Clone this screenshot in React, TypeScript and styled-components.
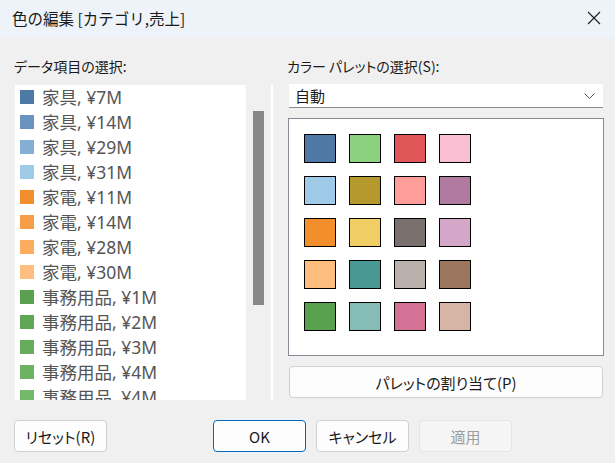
import React from 'react';
import styled, { createGlobalStyle } from 'styled-components';

const GlobalStyle = createGlobalStyle`
  html, body {
    margin: 0;
    padding: 0;
    background: #f0f0f0;
  }
  * {
    box-sizing: border-box;
  }
`;

const font = `"Noto Sans CJK JP", "Noto Sans", sans-serif`;
const listFont = `"Noto Sans", "Noto Sans CJK JP", sans-serif`;

const items = [
  { label: '家具, ¥7M', color: '#4e79a7' },
  { label: '家具, ¥14M', color: '#6a93bf' },
  { label: '家具, ¥29M', color: '#85aed4' },
  { label: '家具, ¥31M', color: '#a0cbe8' },
  { label: '家電, ¥11M', color: '#f28e2b' },
  { label: '家電, ¥14M', color: '#f69d48' },
  { label: '家電, ¥28M', color: '#fbac5f' },
  { label: '家電, ¥30M', color: '#ffbe7d' },
  { label: '事務用品, ¥1M', color: '#59a14f' },
  { label: '事務用品, ¥2M', color: '#5fa755' },
  { label: '事務用品, ¥3M', color: '#65ac5b' },
  { label: '事務用品, ¥4M', color: '#6cb262' },
  { label: '事務用品, ¥4M', color: '#74b869' },
];

const palette = [
  '#4e79a7', '#8cd17d', '#e15759', '#fabfd2',
  '#a0cbe8', '#b6992d', '#ff9d9a', '#b07aa1',
  '#f28e2b', '#f1ce63', '#79706e', '#d4a6c8',
  '#ffbe7d', '#499894', '#bab0ac', '#9d7660',
  '#59a14f', '#86bcb6', '#d37295', '#d7b5a6',
];

const App = () => {
  return (
    <Dialog>
      <GlobalStyle />
      <TitleBar>
        <Title>色の編集 [カテゴリ,売上]</Title>
        <CloseButton>
          <svg width="14" height="14" viewBox="0 0 14 14">
            <path d="M1 1 L13 13 M13 1 L1 13" stroke="#1a1a1a" strokeWidth="1.1" fill="none" />
          </svg>
        </CloseButton>
      </TitleBar>
      <Body>
        <LeftPane>
          <Label>データ項目の選択:</Label>
          <ListRow>
            <List>
              {items.map((item, i) => (
                <Item key={i}>
                  <ItemSwatch color={item.color} />
                  <span>{item.label}</span>
                </Item>
              ))}
            </List>
            <ScrollTrack>
              <ScrollThumb />
            </ScrollTrack>
            <Splitter />
          </ListRow>
        </LeftPane>
        <RightPane>
          <Label>カラー パレットの選択(S):</Label>
          <Select>
            <span>自動</span>
            <svg width="11" height="6" viewBox="0 0 11 6">
              <path d="M0.5 0.5 L5.5 5.5 L10.5 0.5" stroke="#555" strokeWidth="1" fill="none" />
            </svg>
          </Select>
          <PaletteBox>
            <PaletteGrid>
              {palette.map((c, i) => (
                <PaletteSwatch key={i} color={c} />
              ))}
            </PaletteGrid>
          </PaletteBox>
          <Button $wide>パレットの割り当て(P)</Button>
        </RightPane>
      </Body>
      <Footer>
        <Button>リセット(R)</Button>
        <FooterRight>
          <Button $primary>OK</Button>
          <Button>キャンセル</Button>
          <Button disabled>適用</Button>
        </FooterRight>
      </Footer>
    </Dialog>
  );
};

const Dialog = styled.div`
  width: 615px;
  height: 463px;
  background: #f0f0f0;
  font-family: ${font};
  color: #1a1a1a;
  display: flex;
  flex-direction: column;
  overflow: hidden;
`;

const TitleBar = styled.div`
  height: 38px;
  background: #eef3f9;
  display: flex;
  align-items: center;
  justify-content: space-between;
  padding: 0 11px 2px 12px;
`;

const Title = styled.div`
  font-size: 15.5px;
  color: #1a1a1a;
`;

const CloseButton = styled.div`
  width: 20px;
  height: 20px;
  display: flex;
  align-items: center;
  justify-content: center;
`;

const Body = styled.div`
  display: flex;
  padding: 0 11px 0 15px;
  gap: 15px;
`;

const LeftPane = styled.div`
  width: 258px;
  display: flex;
  flex-direction: column;
`;

const RightPane = styled.div`
  flex: 1;
  display: flex;
  flex-direction: column;
`;

const Label = styled.div`
  font-size: 14px;
  height: 47px;
  padding-top: 18px;
  margin-left: -1px;
  color: #1a1a1a;
  font-feature-settings: "palt";
`;

const ListRow = styled.div`
  display: flex;
  height: 315px;
`;

const List = styled.div`
  width: 231px;
  background: #fff;
  overflow: hidden;
  padding-top: 5px;
`;

const Item = styled.div`
  height: 25px;
  display: flex;
  align-items: flex-start;
  gap: 8px;
  padding-left: 5px;
  font-family: ${listFont};
  font-size: 17.5px;
  line-height: 15px;
  color: #555;
  white-space: nowrap;
`;

const ItemSwatch = styled.div<{ color: string }>`
  width: 14px;
  height: 14px;
  flex: none;
  background: ${(p) => p.color};
`;

const ScrollTrack = styled.div`
  width: 25px;
  padding: 26px 0 0 7px;
`;

const ScrollThumb = styled.div`
  width: 11px;
  height: 194px;
  background: #888;
`;

const Splitter = styled.div`
  width: 2px;
  background: #fff;
`;

const Select = styled.div`
  height: 24px;
  margin: -1px 1px 0 1px;
  background: #fff;
  border-bottom: 1px solid #8a8a8a;
  display: flex;
  align-items: center;
  justify-content: space-between;
  padding: 0 8px 0 6px;
  font-size: 15px;
  color: #1a1a1a;
`;

const PaletteBox = styled.div`
  margin-top: 10px;
  height: 238px;
  background: #fff;
  border: 1px solid #8a8a94;
  padding: 15px;
`;

const PaletteGrid = styled.div`
  display: grid;
  grid-template-columns: repeat(4, 32px);
  grid-auto-rows: 29px;
  column-gap: 13px;
  row-gap: 13px;
`;

const PaletteSwatch = styled.div<{ color: string }>`
  background: ${(p) => p.color};
  border: 1.5px solid #000;
`;

const Button = styled.button<{ $primary?: boolean; $wide?: boolean }>`
  font-family: ${font};
  font-size: 15px;
  font-feature-settings: "palt";
  height: 32px;
  width: ${(p) => (p.$wide ? 'auto' : '93px')};
  margin: ${(p) => (p.$wide ? '10px 1px 0 1px' : '0')};
  border-radius: 4px;
  border: 1px solid ${(p) => (p.$primary ? '#0067c0' : '#d0d0d0')};
  background: #fdfdfd;
  color: #1a1a1a;
  padding: 0;
  &:disabled {
    background: #f5f5f5;
    border-color: #e5e5e5;
    color: #9d9d9d;
  }
`;

const Footer = styled.div`
  display: flex;
  justify-content: space-between;
  padding: 0 0 0 14px;
  margin-top: 20px;
`;

const FooterRight = styled.div`
  display: flex;
  gap: 10px;
  padding-right: 103px;
`;

export default App;
